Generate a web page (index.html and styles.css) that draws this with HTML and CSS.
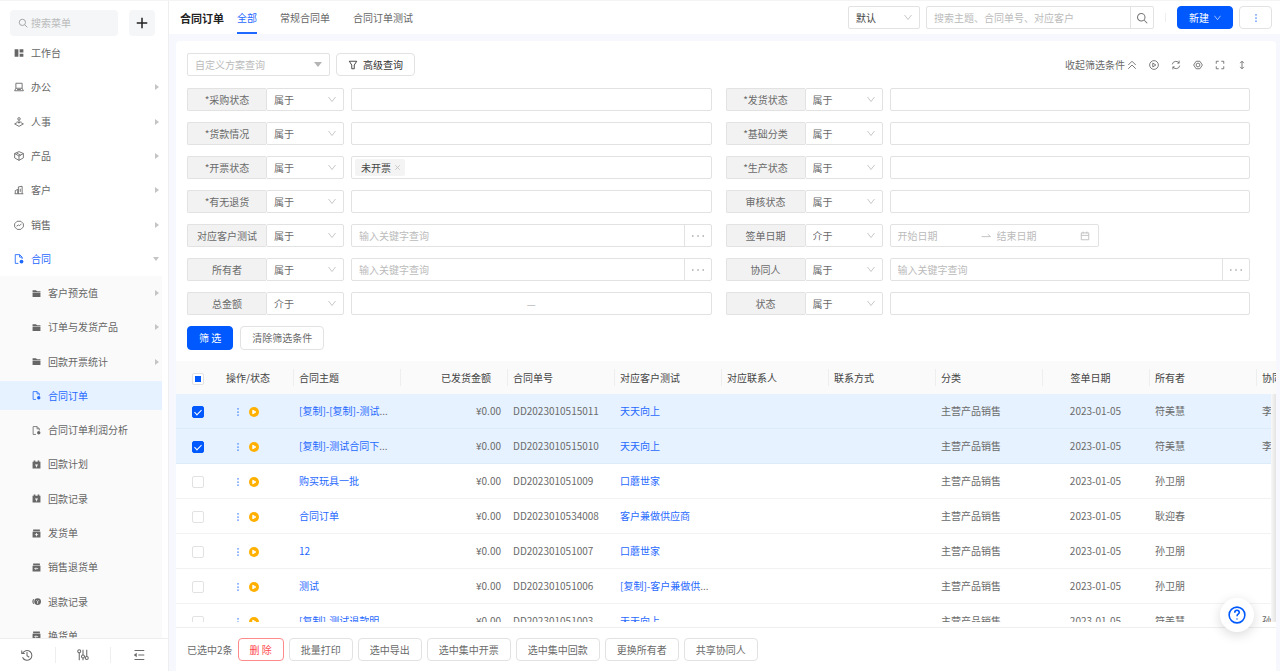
FILE: index.html
```html
<!DOCTYPE html>
<html lang="zh-CN">

<head>
    <meta charset="UTF-8">
    <meta name="viewport" content="width=device-width, initial-scale=1.0">
    <title>合同订单</title>
    <link rel="stylesheet" href="styles.css">
</head>

<body>
    <!-- icons -->
    <svg class="sprite" aria-hidden="true">
        <symbol id="i-search" viewBox="0 0 16 16"><circle cx="7" cy="7" r="5"/><path d="M11 11l4 4"/></symbol>
        <symbol id="i-plus" viewBox="0 0 16 16"><path d="M8 1v14M1 8h14" stroke-width="2"/></symbol>
        <symbol id="i-down" viewBox="0 0 16 16"><path d="M1 4l7 9 7-9"/></symbol>
        <symbol id="i-close" viewBox="0 0 16 16"><path d="M1 1l14 14M15 1L1 15" stroke-width="3"/></symbol>
        <symbol id="i-home" viewBox="0 0 16 16"><path d="M1 2h6v12H1zM9 2h6v5H9zM9 9h6v5H9z" class="solid"/></symbol>
        <symbol id="i-office" viewBox="0 0 16 16"><path d="M3 2h10v8H3zM3 10l-2 4h14l-2-4M5 12h6"/></symbol>
        <symbol id="i-people" viewBox="0 0 16 16"><circle cx="8" cy="3" r="2"/><path d="M8 5v5M5 7c0 3 6 3 6 0M5 9L1 11l7 4 7-4-4-2"/></symbol>
        <symbol id="i-box" viewBox="0 0 16 16"><path d="M8 1l7 3v7l-7 4-7-4V4zM1 4l7 4 7-4M8 8v7M4 3l7 4"/></symbol>
        <symbol id="i-client" viewBox="0 0 16 16"><path d="M1 14h14M2 14V9l4-2v7M7 14V3l6-1v12M10 6v5"/></symbol>
        <symbol id="i-sale" viewBox="0 0 16 16"><path d="M5 2h6l4 4v5l-4 4H5l-4-4V6z"/><path d="M4 10l3-2 2 1 3-3"/></symbol>
        <symbol id="i-doc" viewBox="0 0 16 16"><path d="M7 15H2V1h7l4 4v3M9 1v4h4"/><circle cx="12" cy="12" r="3" class="solid"/></symbol>
        <symbol id="i-folder" viewBox="0 0 16 16"><path d="M1 2h6l2 2h6v2H1zM1 7h14v7H1z" class="solid"/></symbol>
        <symbol id="i-plan" viewBox="0 0 16 16"><path d="M1 3h2V1h3v2h4V1h3v2h2v12H1z" class="solid"/><path d="M6 7l2 2 2-2M8 9v4M6 10h4" class="cut"/></symbol>
        <symbol id="i-ship" viewBox="0 0 16 16"><path d="M2 1h12v3H2zM1 5h14v10H1z" class="solid"/><path d="M8 7v6M5 10h6" class="cut"/></symbol>
        <symbol id="i-back" viewBox="0 0 16 16"><path d="M2 1h12v3H2zM1 5h14v10H1z" class="solid"/><path d="M5 10h6M7 8l-2 2 2 2" class="cut"/></symbol>
        <symbol id="i-refund" viewBox="0 0 16 16"><circle cx="10" cy="8" r="6" class="solid"/><path d="M3 4c-2 3-2 5 0 8" stroke-width="2"/><path d="M8 6l2 2 2-2M10 8v4" class="cut"/></symbol>
        <symbol id="i-history" viewBox="0 0 16 16"><path d="M2 6a6.500 6.500 0 1 1 0 5M1 2v4h4M8 4v5l3 2"/></symbol>
        <symbol id="i-tune" viewBox="0 0 16 16"><path d="M3 5v10M8 1v7M8 12v3M13 1v9"/><circle cx="3" cy="3" r="2"/><circle cx="8" cy="10" r="2"/><circle cx="13" cy="12" r="2"/></symbol>
        <symbol id="i-fold" viewBox="0 0 16 16"><path d="M2 2h13M7 8h8M2 14h13"/><path d="M1 8l4-3v6z" class="solid"/></symbol>
        <symbol id="i-filter" viewBox="0 0 16 16"><path d="M2 2h12l-4 6v6H6V8z"/></symbol>
        <symbol id="i-up2" viewBox="0 0 16 16"><path d="M2 8l6-6 6 6M2 14l6-6 6 6"/></symbol>
        <symbol id="i-play" viewBox="0 0 16 16"><circle cx="8" cy="8" r="7"/><path d="M6 5l5 3-5 3z"/></symbol>
        <symbol id="i-reload" viewBox="0 0 16 16"><path d="M2 7a6 6 0 0 1 11-2M14 9a6 6 0 0 1-11 2M13 1v4h-3M3 15v-4h3"/></symbol>
        <symbol id="i-setting" viewBox="0 0 16 16"><path d="M5 2h6l4 6-4 6H5L1 8z"/><circle cx="8" cy="8" r="3"/></symbol>
        <symbol id="i-full" viewBox="0 0 16 16"><path d="M2 6V2h4M10 2h4v4M14 10v4h-4M6 14H2v-4"/></symbol>
        <symbol id="i-height" viewBox="0 0 16 16"><path d="M8 2v12M5 5l3-3 3 3M5 11l3 3 3-3"/></symbol>
        <symbol id="i-date" viewBox="0 0 16 16"><path d="M2 3h12v11H2zM2 7h12M5 1v3M11 1v3"/></symbol>
        <symbol id="i-swap" viewBox="0 0 16 16"><path d="M1 9h14l-4-4"/></symbol>
        <symbol id="i-dots" viewBox="0 0 16 16"><path d="M7 2h2v2H7zM7 7h2v2H7zM7 12h2v2H7z" class="solid"/></symbol>
        <symbol id="i-ellipsis" viewBox="0 0 16 16"><path d="M0 7h2v2H0zM7 7h2v2H7zM14 7h2v2h-2z" class="solid"/></symbol>
        <symbol id="i-status" viewBox="0 0 16 16"><circle cx="8" cy="8" r="8" class="solid"/><path d="M6 5l5 3-5 3z" fill="#fff" stroke="#fff"/></symbol>
        <symbol id="i-help" viewBox="0 0 16 16"><circle cx="8" cy="8" r="7"/><path d="M6 6c0-3 4-3 4 0 0 1-2 1-2 3M8 11v1"/></symbol>
    </svg>

    <aside class="sidebar">
        <div class="side-top">
            <label class="side-search">
                <svg class="icon"><use href="#i-search"/></svg>
                <input type="text" placeholder="搜索菜单" aria-label="搜索菜单">
            </label>
            <button class="add" aria-label="新增"><svg class="icon"><use href="#i-plus"/></svg></button>
        </div>

        <nav class="nav">
            <div class="nav-list">
                <ul class="menu">
                    <li><a href="#"><svg class="icon"><use href="#i-home"/></svg>工作台</a></li>
                    <li><a href="#" class="more"><svg class="icon"><use href="#i-office"/></svg>办公</a></li>
                    <li><a href="#" class="more"><svg class="icon"><use href="#i-people"/></svg>人事</a></li>
                    <li><a href="#" class="more"><svg class="icon"><use href="#i-box"/></svg>产品</a></li>
                    <li><a href="#" class="more"><svg class="icon"><use href="#i-client"/></svg>客户</a></li>
                    <li><a href="#" class="more"><svg class="icon"><use href="#i-sale"/></svg>销售</a></li>
                    <li><a href="#" class="more open"><svg class="icon"><use href="#i-doc"/></svg>合同</a></li>
                </ul>
                <ul class="menu submenu">
                    <li><a href="#" class="more"><svg class="icon"><use href="#i-folder"/></svg>客户预充值</a></li>
                    <li><a href="#" class="more"><svg class="icon"><use href="#i-folder"/></svg>订单与发货产品</a></li>
                    <li><a href="#" class="more"><svg class="icon"><use href="#i-folder"/></svg>回款开票统计</a></li>
                    <li><a href="#" class="active"><svg class="icon"><use href="#i-doc"/></svg>合同订单</a></li>
                    <li><a href="#"><svg class="icon"><use href="#i-doc"/></svg>合同订单利润分析</a></li>
                    <li><a href="#"><svg class="icon"><use href="#i-plan"/></svg>回款计划</a></li>
                    <li><a href="#"><svg class="icon"><use href="#i-plan"/></svg>回款记录</a></li>
                    <li><a href="#"><svg class="icon"><use href="#i-ship"/></svg>发货单</a></li>
                    <li><a href="#"><svg class="icon"><use href="#i-back"/></svg>销售退货单</a></li>
                    <li><a href="#"><svg class="icon"><use href="#i-refund"/></svg>退款记录</a></li>
                    <li><a href="#"><svg class="icon"><use href="#i-back"/></svg>换货单</a></li>
                </ul>
            </div>
        </nav>

        <div class="side-foot">
            <button aria-label="历史"><svg class="icon"><use href="#i-history"/></svg></button>
            <button aria-label="设置"><svg class="icon"><use href="#i-tune"/></svg></button>
            <button aria-label="收起"><svg class="icon"><use href="#i-fold"/></svg></button>
        </div>
    </aside>

    <main class="main">
        <header class="header">
            <h1>合同订单</h1>
            <nav class="tabs">
                <a href="#" class="current">全部</a>
                <a href="#">常规合同单</a>
                <a href="#">合同订单测试</a>
            </nav>
            <div class="select sort">
                <select aria-label="排序"><option>默认</option></select>
                <svg class="icon"><use href="#i-down"/></svg>
            </div>
            <div class="group search">
                <input type="text" placeholder="搜索主题、合同单号、对应客户" aria-label="搜索">
                <button aria-label="搜索"><svg class="icon"><use href="#i-search"/></svg></button>
            </div>
            <span class="line"></span>
            <button class="btn primary create">新建<svg class="icon"><use href="#i-down"/></svg></button>
            <button class="btn extra" aria-label="更多"><svg class="icon"><use href="#i-dots"/></svg></button>
        </header>

        <section class="panel">
            <div class="toolbar">
                <div class="select plan">
                    <select aria-label="自定义方案查询"><option>自定义方案查询</option></select>
                </div>
                <button class="btn advanced"><svg class="icon"><use href="#i-filter"/></svg>高级查询</button>
                <div class="tools">
                    <button class="collapse">收起筛选条件<svg class="icon"><use href="#i-up2"/></svg></button>
                    <button aria-label="播放"><svg class="icon"><use href="#i-play"/></svg></button>
                    <button aria-label="刷新"><svg class="icon"><use href="#i-reload"/></svg></button>
                    <button aria-label="设置"><svg class="icon"><use href="#i-setting"/></svg></button>
                    <button aria-label="全屏"><svg class="icon"><use href="#i-full"/></svg></button>
                    <button aria-label="行高"><svg class="icon"><use href="#i-height"/></svg></button>
                </div>
            </div>

            <form class="filters">
                <div class="filter">
                    <label for="f1">*采购状态</label>
                    <div class="select"><select id="f1"><option>属于</option></select><svg class="icon"><use href="#i-down"/></svg></div>
                    <input type="text" class="value" aria-label="采购状态">
                </div>
                <div class="filter">
                    <label for="f2">*发货状态</label>
                    <div class="select"><select id="f2"><option>属于</option></select><svg class="icon"><use href="#i-down"/></svg></div>
                    <input type="text" class="value" aria-label="发货状态">
                </div>
                <div class="filter">
                    <label for="f3">*货款情况</label>
                    <div class="select"><select id="f3"><option>属于</option></select><svg class="icon"><use href="#i-down"/></svg></div>
                    <input type="text" class="value" aria-label="货款情况">
                </div>
                <div class="filter">
                    <label for="f4">*基础分类</label>
                    <div class="select"><select id="f4"><option>属于</option></select><svg class="icon"><use href="#i-down"/></svg></div>
                    <input type="text" class="value" aria-label="基础分类">
                </div>
                <div class="filter">
                    <label for="f5">*开票状态</label>
                    <div class="select"><select id="f5"><option>属于</option></select><svg class="icon"><use href="#i-down"/></svg></div>
                    <div class="value tags">
                        <span class="tag">未开票<button type="button" aria-label="移除"><svg class="icon"><use href="#i-close"/></svg></button></span>
                        <input type="text" aria-label="开票状态">
                    </div>
                </div>
                <div class="filter">
                    <label for="f6">*生产状态</label>
                    <div class="select"><select id="f6"><option>属于</option></select><svg class="icon"><use href="#i-down"/></svg></div>
                    <input type="text" class="value" aria-label="生产状态">
                </div>
                <div class="filter">
                    <label for="f7">*有无退货</label>
                    <div class="select"><select id="f7"><option>属于</option></select><svg class="icon"><use href="#i-down"/></svg></div>
                    <input type="text" class="value" aria-label="有无退货">
                </div>
                <div class="filter">
                    <label for="f8">审核状态</label>
                    <div class="select"><select id="f8"><option>属于</option></select><svg class="icon"><use href="#i-down"/></svg></div>
                    <input type="text" class="value" aria-label="审核状态">
                </div>
                <div class="filter">
                    <label for="f9">对应客户测试</label>
                    <div class="select"><select id="f9"><option>属于</option></select><svg class="icon"><use href="#i-down"/></svg></div>
                    <div class="value group">
                        <input type="text" placeholder="输入关键字查询" aria-label="对应客户测试">
                        <button type="button" aria-label="选择"><svg class="icon"><use href="#i-ellipsis"/></svg></button>
                    </div>
                </div>
                <div class="filter">
                    <label for="f10">签单日期</label>
                    <div class="select"><select id="f10"><option>介于</option></select><svg class="icon"><use href="#i-down"/></svg></div>
                    <div class="value dates">
                        <input type="text" placeholder="开始日期" aria-label="开始日期">
                        <svg class="icon"><use href="#i-swap"/></svg>
                        <input type="text" placeholder="结束日期" aria-label="结束日期">
                        <svg class="icon"><use href="#i-date"/></svg>
                    </div>
                </div>
                <div class="filter">
                    <label for="f11">所有者</label>
                    <div class="select"><select id="f11"><option>属于</option></select><svg class="icon"><use href="#i-down"/></svg></div>
                    <div class="value group">
                        <input type="text" placeholder="输入关键字查询" aria-label="所有者">
                        <button type="button" aria-label="选择"><svg class="icon"><use href="#i-ellipsis"/></svg></button>
                    </div>
                </div>
                <div class="filter">
                    <label for="f12">协同人</label>
                    <div class="select"><select id="f12"><option>属于</option></select><svg class="icon"><use href="#i-down"/></svg></div>
                    <div class="value group">
                        <input type="text" placeholder="输入关键字查询" aria-label="协同人">
                        <button type="button" aria-label="选择"><svg class="icon"><use href="#i-ellipsis"/></svg></button>
                    </div>
                </div>
                <div class="filter">
                    <label for="f13">总金额</label>
                    <div class="select"><select id="f13"><option>介于</option></select><svg class="icon"><use href="#i-down"/></svg></div>
                    <div class="value range">
                        <input type="text" aria-label="最小金额"><span>—</span><input type="text" aria-label="最大金额">
                    </div>
                </div>
                <div class="filter">
                    <label for="f14">状态</label>
                    <div class="select"><select id="f14"><option>属于</option></select><svg class="icon"><use href="#i-down"/></svg></div>
                    <input type="text" class="value" aria-label="状态">
                </div>
            </form>

            <div class="actions">
                <button class="btn primary">筛 选</button>
                <button class="btn">清除筛选条件</button>
            </div>

            <div class="table-wrap">
                <table>
                    <colgroup>
                        <col class="c-check"><col class="c-op"><col span="10" class="c-data">
                    </colgroup>
                    <thead>
                        <tr>
                            <th class="check"><input type="checkbox" class="part" aria-label="全选"></th>
                            <th>操作/状态</th>
                            <th>合同主题</th>
                            <th class="money">已发货金额</th>
                            <th>合同单号</th>
                            <th>对应客户测试</th>
                            <th>对应联系人</th>
                            <th>联系方式</th>
                            <th>分类</th>
                            <th class="date">签单日期</th>
                            <th>所有者</th>
                            <th>协同人</th>
                        </tr>
                    </thead>
                    <tbody>
                        <tr class="selected">
                            <td class="check"><input type="checkbox" checked aria-label="选择"></td>
                            <td class="op"><button aria-label="操作"><svg class="icon"><use href="#i-dots"/></svg></button><svg class="icon status"><use href="#i-status"/></svg></td>
                            <td><a href="#">[复制]-[复制]-测试</a>...</td>
                            <td class="money">¥0.00</td>
                            <td>DD2023010515011</td>
                            <td><a href="#">天天向上</a></td>
                            <td></td>
                            <td></td>
                            <td>主营产品销售</td>
                            <td class="date">2023-01-05</td>
                            <td>符美慧</td>
                            <td>李</td>
                        </tr>
                        <tr class="selected">
                            <td class="check"><input type="checkbox" checked aria-label="选择"></td>
                            <td class="op"><button aria-label="操作"><svg class="icon"><use href="#i-dots"/></svg></button><svg class="icon status"><use href="#i-status"/></svg></td>
                            <td><a href="#">[复制]-测试合同下</a>...</td>
                            <td class="money">¥0.00</td>
                            <td>DD2023010515010</td>
                            <td><a href="#">天天向上</a></td>
                            <td></td>
                            <td></td>
                            <td>主营产品销售</td>
                            <td class="date">2023-01-05</td>
                            <td>符美慧</td>
                            <td>李</td>
                        </tr>
                        <tr>
                            <td class="check"><input type="checkbox" aria-label="选择"></td>
                            <td class="op"><button aria-label="操作"><svg class="icon"><use href="#i-dots"/></svg></button><svg class="icon status"><use href="#i-status"/></svg></td>
                            <td><a href="#">购买玩具一批</a></td>
                            <td class="money">¥0.00</td>
                            <td>DD202301051009</td>
                            <td><a href="#">口蘑世家</a></td>
                            <td></td>
                            <td></td>
                            <td>主营产品销售</td>
                            <td class="date">2023-01-05</td>
                            <td>孙卫朋</td>
                            <td></td>
                        </tr>
                        <tr>
                            <td class="check"><input type="checkbox" aria-label="选择"></td>
                            <td class="op"><button aria-label="操作"><svg class="icon"><use href="#i-dots"/></svg></button><svg class="icon status"><use href="#i-status"/></svg></td>
                            <td><a href="#">合同订单</a></td>
                            <td class="money">¥0.00</td>
                            <td>DD2023010534008</td>
                            <td><a href="#">客户兼做供应商</a></td>
                            <td></td>
                            <td></td>
                            <td>主营产品销售</td>
                            <td class="date">2023-01-05</td>
                            <td>耿迎春</td>
                            <td></td>
                        </tr>
                        <tr>
                            <td class="check"><input type="checkbox" aria-label="选择"></td>
                            <td class="op"><button aria-label="操作"><svg class="icon"><use href="#i-dots"/></svg></button><svg class="icon status"><use href="#i-status"/></svg></td>
                            <td><a href="#">12</a></td>
                            <td class="money">¥0.00</td>
                            <td>DD202301051007</td>
                            <td><a href="#">口蘑世家</a></td>
                            <td></td>
                            <td></td>
                            <td>主营产品销售</td>
                            <td class="date">2023-01-05</td>
                            <td>孙卫朋</td>
                            <td></td>
                        </tr>
                        <tr>
                            <td class="check"><input type="checkbox" aria-label="选择"></td>
                            <td class="op"><button aria-label="操作"><svg class="icon"><use href="#i-dots"/></svg></button><svg class="icon status"><use href="#i-status"/></svg></td>
                            <td><a href="#">测试</a></td>
                            <td class="money">¥0.00</td>
                            <td>DD202301051006</td>
                            <td><a href="#">[复制]-客户兼做供</a>...</td>
                            <td></td>
                            <td></td>
                            <td>主营产品销售</td>
                            <td class="date">2023-01-05</td>
                            <td>孙卫朋</td>
                            <td></td>
                        </tr>
                        <tr>
                            <td class="check"><input type="checkbox" aria-label="选择"></td>
                            <td class="op"><button aria-label="操作"><svg class="icon"><use href="#i-dots"/></svg></button><svg class="icon status"><use href="#i-status"/></svg></td>
                            <td><a href="#">[复制]-测试退款明</a>...</td>
                            <td class="money">¥0.00</td>
                            <td>DD202301051003</td>
                            <td><a href="#">天天向上</a></td>
                            <td></td>
                            <td></td>
                            <td>主营产品销售</td>
                            <td class="date">2023-01-05</td>
                            <td>符美慧</td>
                            <td>孙</td>
                        </tr>
                    </tbody>
                </table>
            </div>

            <footer class="batch">
                <span>已选中2条</span>
                <button class="btn danger">删 除</button>
                <button class="btn">批量打印</button>
                <button class="btn">选中导出</button>
                <button class="btn">选中集中开票</button>
                <button class="btn">选中集中回款</button>
                <button class="btn">更换所有者</button>
                <button class="btn">共享协同人</button>
            </footer>
        </section>
    </main>

    <button class="help" aria-label="帮助"><svg class="icon"><use href="#i-help"/></svg></button>
</body>

</html>
```
FILE: styles.css
```css
* {
    margin: 0;
    padding: 0;
    box-sizing: border-box;
}

body {
    display: flex;
    height: 100vh;
    overflow: hidden;
    border-top: 1px solid #f4f4f4;
    background-color: #f7f8fd;
    color: #6a6a6a;
    font-family: "Noto Sans CJK SC", sans-serif;
    font-size: 10px;
    line-height: 16px;
}

input,
select,
button {
    font: inherit;
    color: inherit;
    border: none;
    outline: none;
    background: none;
    min-width: 0;
}

select {
    appearance: none;
}

::placeholder {
    color: #bbb;
}

a {
    color: #1f69ff;
    text-decoration: none;
}

ul {
    list-style: none;
}

.sprite {
    position: absolute;
    width: 0;
    height: 0;
}

.icon {
    width: 10px;
    height: 10px;
    flex: none;
    fill: none;
    stroke: currentColor;
    stroke-width: 1.4;
}

.solid {
    fill: currentColor;
    stroke: none;
}

.cut {
    stroke: #fff;
}

/* sidebar */
.sidebar {
    width: 169px;
    flex: none;
    display: flex;
    flex-direction: column;
    background-color: #fff;
    border-right: 1px solid #eee;
}

.side-top {
    display: flex;
    gap: 11px;
    padding: 9px 13px 0 10px;
}

.side-search {
    flex: 1;
    display: flex;
    align-items: center;
    gap: 3px;
    padding: 0 8px;
    min-width: 0;
    height: 26px;
    border-radius: 4px;
    background-color: #f4f6f8;
    color: #999;
}

.side-search input {
    width: 100%;
}

.add {
    width: 26px;
    height: 26px;
    border-radius: 4px;
    background-color: #f4f6f8;
    color: #222;
    line-height: 0;
}

.add .icon {
    width: 12px;
    height: 12px;
}

.nav {
    flex: 1;
    min-height: 0;
    overflow: hidden;
}

.nav-list {
    height: calc(100% + 15px);
    display: flex;
    flex-direction: column;
}

.menu {
    flex: 7;
    display: flex;
    flex-direction: column;
    margin-right: 6px;
}

.menu li {
    flex: 1;
    min-height: 32px;
    display: flex;
    align-items: center;
}

.menu a {
    flex: 1;
    display: flex;
    align-items: center;
    gap: 7px;
    height: 29px;
    padding: 0 3px 0 14px;
    color: #666;
}

.submenu {
    flex: 11;
    background-color: #fafafa;
}

.submenu a {
    padding-left: 32px;
}

.submenu .icon {
    width: 9px;
    height: 9px;
}

.menu .more::after {
    content: "";
    margin-left: auto;
    border: 3px solid transparent;
    border-left: 4px solid #c4c4c4;
    border-right: none;
}

.menu .open {
    color: #1f69ff;
}

.menu .open::after {
    border: 3px solid transparent;
    border-top: 4px solid #c4c4c4;
    border-bottom: none;
}

.menu .active {
    color: #1f69ff;
    background-color: #e6f2ff;
}

.side-foot {
    display: flex;
    align-items: center;
    height: 33px;
    border-top: 1px solid #eee;
    padding-right: 2px;
}

.side-foot button {
    flex: 1;
    height: 16px;
    line-height: 0;
}

.side-foot button + button {
    border-left: 1px solid #eee;
}

.side-foot .icon {
    width: 12px;
    height: 12px;
}

/* controls */
.btn {
    height: 23px;
    padding: 0 11px;
    border: 1px solid #e2e2e2;
    border-radius: 4px;
    background-color: #fff;
    white-space: nowrap;
}

.primary {
    border-color: #0059ff;
    background-color: #0059ff;
    color: #fff;
}

.danger {
    border-color: #ff8a8a;
    color: #ff4d4f;
}

.select {
    position: relative;
    height: 23px;
    border: 1px solid #e2e2e2;
    border-radius: 2px;
    background-color: #fff;
}

.select select {
    width: 100%;
    height: 100%;
    padding: 0 7px;
}

.select .icon {
    position: absolute;
    right: 7px;
    top: 6px;
    width: 8px;
    height: 8px;
    color: #b0b0b0;
    pointer-events: none;
}

.group {
    display: flex;
}

.group input {
    flex: 1;
    padding: 0 7px;
}

.group button {
    width: 27px;
    border-left: 1px solid #e2e2e2;
    color: #aaa;
    line-height: 0;
}

.group .icon {
    width: 12px;
    height: 12px;
}

/* header */
.header {
    display: flex;
    align-items: center;
    height: 33px;
    padding: 0 8px 0 11px;
    background-color: #fff;
}

.main {
    flex: 1;
    min-width: 0;
    display: flex;
    flex-direction: column;
}

.header h1 {
    margin-right: 13px;
    color: #222;
    font-size: 11px;
    font-weight: 700;
    white-space: nowrap;
}

.tabs {
    align-self: stretch;
    display: flex;
    gap: 23px;
    margin-right: auto;
    white-space: nowrap;
}

.tabs a {
    padding-top: 2px;
    line-height: 30px;
    color: #666;
}

.tabs .current {
    color: #1f69ff;
    border-bottom: 2px solid #1f69ff;
}

.sort {
    width: 72px;
    margin-right: 6px;
    color: #444;
}

.search {
    width: 228px;
    height: 23px;
    border: 1px solid #e2e2e2;
    border-radius: 2px;
}

.search button {
    width: 23px;
    color: #777;
}

.line {
    width: 1px;
    height: 9px;
    margin: 0 11px;
    background-color: #eee;
}

.create {
    display: flex;
    align-items: center;
    gap: 5px;
    margin-right: 6px;
}

.create .icon {
    width: 7px;
    height: 7px;
}

.extra {
    width: 33px;
    color: #1f69ff;
    line-height: 0;
}

/* panel */
.panel {
    flex: 1;
    min-height: 0;
    display: flex;
    flex-direction: column;
    margin: 7px 4px 0 7px;
    padding-top: 12px;
    border-radius: 4px 4px 0 0;
    background-color: #fff;
}

.toolbar {
    display: flex;
    align-items: center;
    gap: 6px;
    margin: 0 29px 12px 11px;
}

.plan {
    width: 143px;
    color: #bbb;
}

.plan::after {
    content: "";
    position: absolute;
    right: 7px;
    top: 8px;
    border: 4px solid transparent;
    border-top: 5px solid #b4b4b4;
    border-bottom: none;
}

.advanced {
    display: flex;
    align-items: center;
    gap: 5px;
    color: #333;
}

.tools {
    display: flex;
    align-items: center;
    gap: 12px;
    margin-left: auto;
}

.tools button {
    display: flex;
    align-items: center;
    gap: 2px;
}

.filters {
    display: grid;
    grid-template-columns: 1fr 1fr;
    gap: 11px 14px;
    margin: 0 26px 11px 11px;
}

.filter {
    display: flex;
    height: 23px;
}

.filter label {
    width: 79px;
    flex: none;
    border: 1px solid #e2e2e2;
    border-right: none;
    border-radius: 2px 0 0 2px;
    background-color: #f2f2f2;
    line-height: 21px;
    text-align: center;
}

.filter .select {
    width: 78px;
    flex: none;
    margin-right: 7px;
}

.value {
    flex: 1;
    min-width: 0;
    border: 1px solid #e2e2e2;
    border-radius: 2px;
}

.tags,
.range,
.dates {
    display: flex;
    align-items: center;
}

.tag {
    display: flex;
    gap: 4px;
    margin-left: 3px;
    padding: 0 5px 0 6px;
    border-radius: 2px;
    background-color: #f4f4f4;
    color: #444;
    line-height: 17px;
}

.tag button {
    color: #c4c4c4;
    line-height: 0;
}

.tag .icon {
    width: 5px;
    height: 5px;
}

.tags input,
.range input {
    flex: 1;
}

.range span {
    color: #bbb;
}

.dates {
    flex: none;
    width: 209px;
    padding: 0 8px 0 7px;
    color: #bbb;
}

.dates input {
    flex: 1;
}

.dates .icon {
    margin-right: 6px;
}

.dates .icon:last-child {
    margin-right: 0;
}

.actions {
    display: flex;
    gap: 7px;
    margin: 0 11px 11px;
}

.actions .btn {
    height: 24px;
}

/* table */
.table-wrap {
    position: relative;
    flex: 1;
    min-height: 0;
    overflow: hidden;
}

.table-wrap::after {
    content: "";
    position: absolute;
    top: 33px;
    right: 0;
    bottom: 0;
    width: 5px;
    background: linear-gradient(to right, #f8f8f8, #e4e4e4);
}

table {
    width: 1187px;
    table-layout: fixed;
    border-collapse: separate;
    border-spacing: 0;
}

.c-check {
    width: 44px;
}

.c-op {
    width: 73px;
}

.c-data {
    width: 107px;
}

th {
    position: relative;
    height: 33px;
    padding: 0 16px 0 6px;
    background-color: #fafafa;
    color: #444;
    font-weight: 400;
    text-align: left;
    white-space: nowrap;
}

th + th + th::before {
    content: "";
    position: absolute;
    left: 0;
    top: 8px;
    height: 17px;
    border-left: 1px solid #eee;
}

td {
    height: 35px;
    padding: 0 6px;
    border-bottom: 1px solid #f2f2f2;
    white-space: nowrap;
}

.selected td {
    background-color: #e6f2ff;
    border-color: #dcebfa;
}

th.check,
td.check {
    padding: 0;
    text-align: center;
}

.money {
    text-align: right;
}

.date {
    text-align: center;
}

.op button {
    margin: 0 6px 0 7px;
    color: #1f69ff;
}

.op .icon {
    vertical-align: middle;
}

.op .status {
    color: #ffb000;
}

.check input {
    position: relative;
    appearance: none;
    width: 12px;
    height: 12px;
    border: 1px solid #e2e2e2;
    border-radius: 2px;
    background-color: #fff;
    vertical-align: middle;
}

.check input:checked {
    border-color: #0059ff;
    background-color: #0059ff;
}

.check input:checked::before {
    content: "";
    position: absolute;
    left: 3px;
    top: 1px;
    width: 3px;
    height: 6px;
    border: solid #fff;
    border-width: 0 1px 1px 0;
    transform: rotate(45deg);
}

.check .part::before {
    content: "";
    position: absolute;
    inset: 2px;
    background-color: #0059ff;
}

/* batch bar */
.batch {
    display: flex;
    align-items: center;
    gap: 5px;
    height: 44px;
    margin-top: 5px;
    padding: 0 11px;
    border-top: 1px solid #eee;
}

.help {
    position: fixed;
    right: 26px;
    bottom: 39px;
    width: 34px;
    height: 34px;
    border-radius: 50%;
    background-color: #fff;
    box-shadow: 0 3px 12px rgba(0, 0, 0, 0.15);
    color: #0059ff;
    line-height: 0;
}

.help .icon {
    width: 18px;
    height: 18px;
}
```
